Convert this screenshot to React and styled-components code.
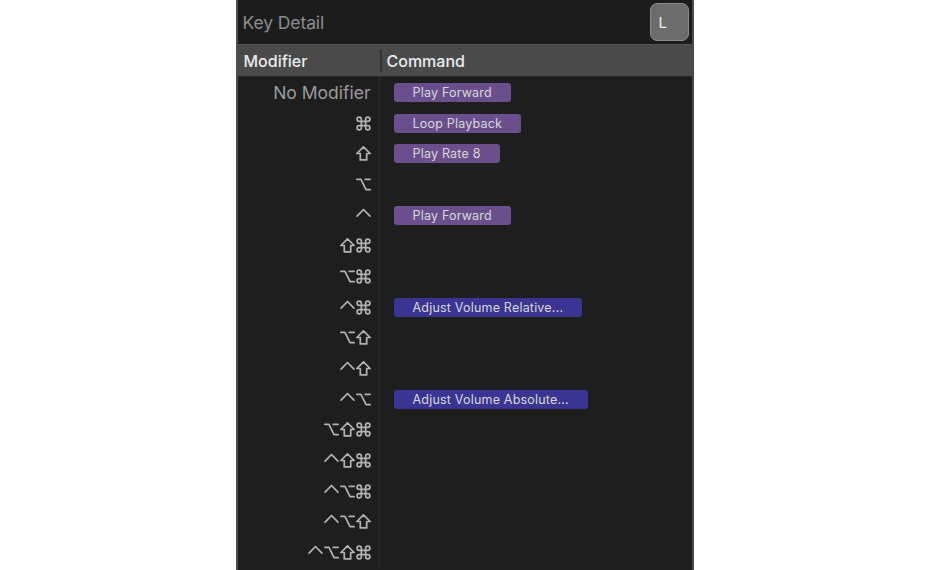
import styled, { createGlobalStyle } from "styled-components";

const rows = [
  { mod: null, cmd: "Play Forward", kind: "play" },
  { mod: "cmd", cmd: "Loop Playback", kind: "play" },
  { mod: "shift", cmd: "Play Rate 8", kind: "play" },
  { mod: "opt" },
  { mod: "ctrl", cmd: "Play Forward", kind: "play" },
  { mod: "shift cmd" },
  { mod: "opt cmd" },
  { mod: "ctrl cmd", cmd: "Adjust Volume Relative...", kind: "audio" },
  { mod: "opt shift" },
  { mod: "ctrl shift" },
  { mod: "ctrl opt", cmd: "Adjust Volume Absolute...", kind: "audio" },
  { mod: "opt shift cmd" },
  { mod: "ctrl shift cmd" },
  { mod: "ctrl opt cmd" },
  { mod: "ctrl opt shift" },
  { mod: "ctrl opt shift cmd" },
];

const glyphPaths = {
  cmd: "M10 4v8a2 2 0 1 0 2-2H4a2 2 0 1 0 2 2V4a2 2 0 1 0-2 2h8a2 2 0 1 0-2-2",
  shift: "M8 1.8L14.2 8H11v6H5V8H1.8Z",
  opt: "M1.8 3.2H5.6L10.4 12.8H14.2M9.6 3.2H14.2",
  ctrl: "M2 8.6L8 2.4L14 8.6",
};

function ModGlyph({ name }) {
  return (
    <Glyph viewBox="1 1 14 14">
      <path d={glyphPaths[name]} />
    </Glyph>
  );
}

function App() {
  return (
    <>
      <GlobalStyle />
      <Page>
        <Panel>
          <TitleBar>
            <Title>Key Detail</Title>
            <KeyCap>L</KeyCap>
          </TitleBar>
          <HeaderRow>
            <HeaderCell>Modifier</HeaderCell>
            <HeaderCell $last>Command</HeaderCell>
          </HeaderRow>
          <Body>
            {rows.map((row, i) => (
              <Row key={i}>
                <ModCell>
                  {row.mod ? (
                    row.mod.split(" ").map((m) => <ModGlyph key={m} name={m} />)
                  ) : (
                    <NoMod>No Modifier</NoMod>
                  )}
                </ModCell>
                <CmdCell>
                  {row.cmd && <Badge $kind={row.kind}>{row.cmd}</Badge>}
                </CmdCell>
              </Row>
            ))}
          </Body>
        </Panel>
      </Page>
    </>
  );
}

export default App;

const GlobalStyle = createGlobalStyle`
  html, body {
    margin: 0;
    padding: 0;
    background: #ffffff;
  }
  body {
    font-family: Inter, "Liberation Sans", sans-serif;
  }
`;

const Page = styled.div`
  display: flex;
  justify-content: center;
  height: 570px;
  overflow: hidden;
`;

const Panel = styled.div`
  width: 454px;
  height: 570px;
  background: #1e1e1e;
  border-left: 2px solid #4e4e4e;
  border-right: 2px solid #4a4a4a;
  display: flex;
  flex-direction: column;
`;

const TitleBar = styled.div`
  height: 44px;
  display: flex;
  align-items: center;
  justify-content: space-between;
  padding: 0 3px 0 5px;
  background: #1c1c1c;
`;

const Title = styled.div`
  font-size: 17.5px;
  color: #8c8c8c;
  letter-spacing: -0.1px;
`;

const KeyCap = styled.div`
  width: 39px;
  height: 38px;
  box-sizing: border-box;
  border-radius: 7px;
  background: #6c6c6c;
  border: 1px solid #8a8a8a;
  color: #f2f2f2;
  font-size: 15px;
  display: flex;
  align-items: flex-end;
  padding: 0 0 8px 8px;
  margin-top: -1px;
`;

const HeaderRow = styled.div`
  height: 31px;
  display: grid;
  grid-template-columns: 142px 1fr;
  background: #4a4a4a;
  border-top: 1px solid #545454;
  border-bottom: 1px solid #2a2a2a;
`;

const HeaderCell = styled.div`
  display: flex;
  align-items: center;
  padding-left: ${(p) => (p.$last ? "5px" : "6px")};
  font-size: 16px;
  font-weight: 500;
  color: #ececec;
  border-left: ${(p) => (p.$last ? "2px solid #333333" : "none")};
  margin: ${(p) => (p.$last ? "4px 0" : "0")};
`;

const Body = styled.div`
  flex: 1;
  display: flex;
  flex-direction: column;
`;

const Row = styled.div`
  height: 30.7px;
  flex-shrink: 0;
  display: grid;
  grid-template-columns: 142px 1fr;
`;

const ModCell = styled.div`
  display: flex;
  align-items: center;
  justify-content: flex-end;
  gap: 1px;
  padding-right: 7px;
  border-right: 2px solid #262626;
`;

const NoMod = styled.span`
  color: #9b9b9b;
  font-size: 17.5px;
`;

const Glyph = styled.svg`
  width: 15px;
  height: 15px;
  fill: none;
  stroke: #b2b2b2;
  stroke-width: 1.6;
  stroke-linejoin: round;
  stroke-linecap: round;
`;

const CmdCell = styled.div`
  display: flex;
  align-items: center;
  padding-left: 14px;
`;

const Badge = styled.div`
  height: 19px;
  display: flex;
  align-items: center;
  padding: 0 19px;
  border-radius: 3px;
  font-size: 12.5px;
  color: #d8d8d8;
  letter-spacing: 0.2px;
  background: ${(p) => (p.$kind === "audio" ? "#3a3592" : "#6a4f8c")};
`;
